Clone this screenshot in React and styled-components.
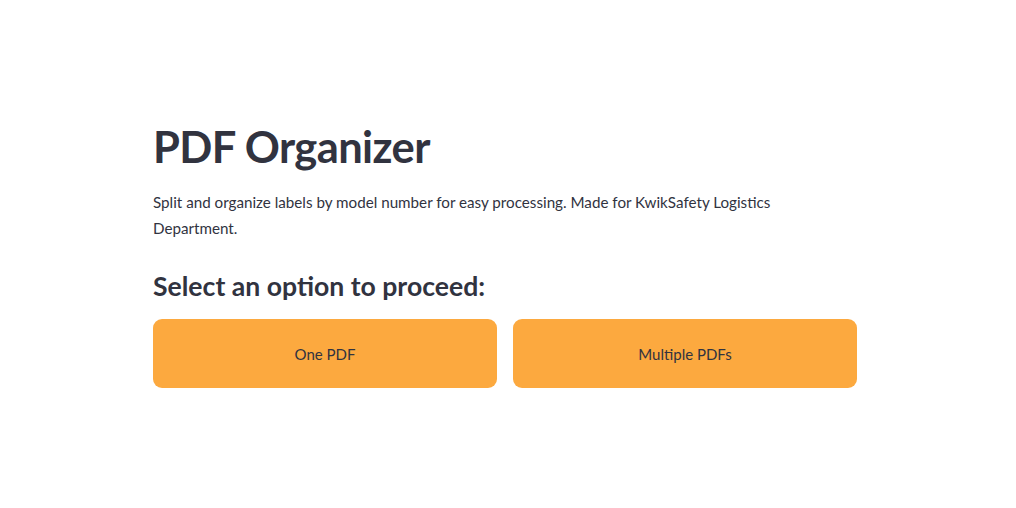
import React from "react";
import styled, { createGlobalStyle } from "styled-components";

const GlobalStyle = createGlobalStyle`
    body {
        margin: 0;
        padding-right: 6px;
        background: #ffffff;
        font-family: Lato, "Noto Sans", sans-serif;
        color: #31333f;
    }
`;

const Main = styled.main`
    width: 704px;
    margin: 0 auto;
    padding-top: 120px;
`;

const Title = styled.h1`
    margin: 0;
    font-size: 43.5px;
    line-height: 52px;
    font-weight: 700;
    letter-spacing: -0.6px;
`;

const Intro = styled.p`
    margin: 18px 0 0;
    font-size: 15.2px;
    line-height: 25.6px;
    width: 640px;
`;

const Subtitle = styled.h3`
    margin: 28px 0 0;
    font-size: 26.6px;
    line-height: 34px;
    font-weight: 700;
`;

const Options = styled.div`
    display: grid;
    grid-template-columns: 1fr 1fr;
    gap: 16px;
    margin-top: 16px;
`;

const OptionButton = styled.button`
    height: 69px;
    border: none;
    border-radius: 9px;
    background: #fca93f;
    color: #31333f;
    font-family: inherit;
    font-size: 15px;
    cursor: pointer;
`;

const App = () => {
    return (
        <>
            <GlobalStyle />
            <Main>
                <Title>PDF Organizer</Title>
                <Intro>
                    Split and organize labels by model number for easy processing. Made for KwikSafety Logistics Department.
                </Intro>
                <Subtitle>Select an option to proceed:</Subtitle>
                <Options>
                    <OptionButton>One PDF</OptionButton>
                    <OptionButton>Multiple PDFs</OptionButton>
                </Options>
            </Main>
        </>
    );
};

export default App;
